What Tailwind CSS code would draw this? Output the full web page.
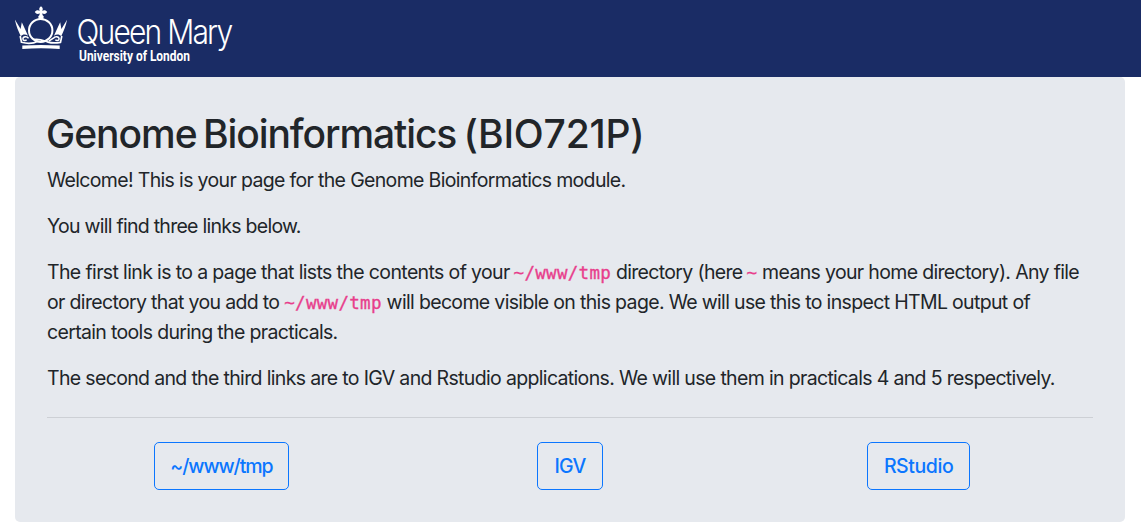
<!DOCTYPE html>
<html lang="en">
<head>
<meta charset="utf-8">
<title>Genome Bioinformatics (BIO721P)</title>
<script src="https://cdn.jsdelivr.net/npm/@tailwindcss/browser@4"></script>
</head>
<body class="bg-white font-['Inter',sans-serif] text-[#212529] antialiased">
<header class="h-[77px] bg-[#1a2c65] pl-[15px]">
  <svg class="block" width="225" height="77" viewBox="15 0 225 77" fill="none" stroke="#fff" role="img" aria-label="Queen Mary University of London">
    <g fill="#fff" stroke="none">
      <path d="M41 6.300c1.800 1.300 2.200 2.700 1.300 4.700 1.200-1.100 3.600-1.200 4.900 1.100-1.300 2.300-3.700 2.200-4.900 1.100 0 1.600.5 2.400 1.500 3.200l-.6 2.500h-4.400l-.6-2.500c1-.8 1.500-1.600 1.500-3.200-1.200 1.100-3.600 1.200-4.900-1.100 1.300-2.300 3.700-2.200 4.900-1.100-.9-2-.5-3.400 1.300-4.700z"/>
      <path d="M14.900 19.700l5.700 9.300 1.200-6.700c1.900 4 3.900 8.500 6.200 13.400-2.600-1.700-5.400-1.500-7.200.6-2.300-5-4.700-10.500-5.900-16.600z"/>
      <path d="M67.100 19.700l-5.700 9.300-1.200-6.700c-1.900 4-3.900 8.500-6.200 13.400 2.600-1.700 5.400-1.500 7.200.6 2.300-5 4.700-10.500 5.900-16.600z"/>
      <path d="M22.300 45.600c12.400-.8 25-.8 37.400 0v3.300c-12.400-.8-25-.8-37.400 0z"/>
    </g>
    <ellipse cx="40.700" cy="30.400" rx="11.700" ry="11.500" stroke-width="2"/>
    <path d="M20.200 36l1.300 6.300c5 1.300 11.500 1.500 16.300-1.100M34 39.500c6-1 10.500 1.500 14.100 2.600 4.300 1.300 8 1 12.400.2l1.300-6.300" stroke-width="1.700"/>
    <path d="M28.500 38.300c-1.300-2.300-5.400-2-5.600.5-.1 2 2.800 2.400 3.600.8M53.500 38.300c1.300-2.300 5.400-2 5.600.5.1 2-2.800 2.400-3.600.8M53.800 37.900l-5 3.300" stroke-width="1.500"/>
    <g fill="#fff" stroke="none">
      <text x="76.500" y="43.500" class="font-['Inter',sans-serif] text-[33.5px] font-light tracking-[-2px]" textLength="155" lengthAdjust="spacingAndGlyphs">Queen Mary</text>
      <text x="79" y="61" class="font-['Roboto',sans-serif] text-[14px] font-bold" textLength="111" lengthAdjust="spacingAndGlyphs">University of London</text>
    </g>
  </svg>
</header>
<main class="mx-[15px] mr-4 h-[445px] rounded-[5px] bg-[#e6e9ee] p-8">
  <h1 class="-ml-px mb-2 h-12 whitespace-nowrap text-[39px] leading-[50px] font-medium tracking-[-1px]">Genome <span class="-ml-[3px] tracking-[-1.1px]">Bioinformatics</span> <span class="-ml-[2px] tracking-[-0.2px]">(BIO721P)</span></h1>
  <div class="flex flex-col gap-4 whitespace-nowrap text-[19.5px] leading-[30px] font-normal tracking-[-0.66px]">
    <p>Welcome! This is your page for the Genome Bioinformatics module.</p>
    <p class="tracking-[-0.73px]">You will find three links below.</p>
    <p><span class="tracking-[-0.63px]">The first link is to a page that lists the contents of your</span> <code class="-ml-px font-['DejaVu_Sans_Mono',monospace] text-[17.5px] leading-none font-normal tracking-[0.3px] text-[#e83e8c] [-webkit-text-stroke:0.35px_#e83e8c]">~/www/tmp</code> directory (here <code class="-ml-px font-['DejaVu_Sans_Mono',monospace] text-[17.5px] leading-none font-normal tracking-[0.3px] text-[#e83e8c] [-webkit-text-stroke:0.35px_#e83e8c]">~</code> means your home directory). Any file<br>or directory that you add to <code class="font-['DejaVu_Sans_Mono',monospace] text-[17.5px] leading-none font-normal tracking-[0.3px] text-[#e83e8c] [-webkit-text-stroke:0.35px_#e83e8c]">~/www/tmp</code> will become visible on this page. We will use this to inspect HTML output of<br>certain tools during the practicals.</p>
    <p>The second and the third links are to IGV and Rstudio applications. We will use them in practicals 4 and 5 respectively.</p>
  </div>
  <hr class="mt-6 mb-6 border-t border-[#cdd0d5]">
  <nav class="grid grid-cols-3 justify-items-center text-[19.5px] font-medium tracking-[-0.7px] text-[#0b76ff]">
    <a class="flex h-12 w-[135px] items-center justify-center rounded-[5px] border border-[#0b76ff] pt-0.5 tracking-[-1.1px]">~/www/tmp</a>
    <a class="flex h-12 w-[66px] items-center justify-center rounded-[5px] border border-[#0b76ff] pt-0.5">IGV</a>
    <a class="flex h-12 w-[103px] items-center justify-center rounded-[5px] border border-[#0b76ff] pt-0.5 tracking-[-0.4px]">RStudio</a>
  </nav>
</main>
</body>
</html>
